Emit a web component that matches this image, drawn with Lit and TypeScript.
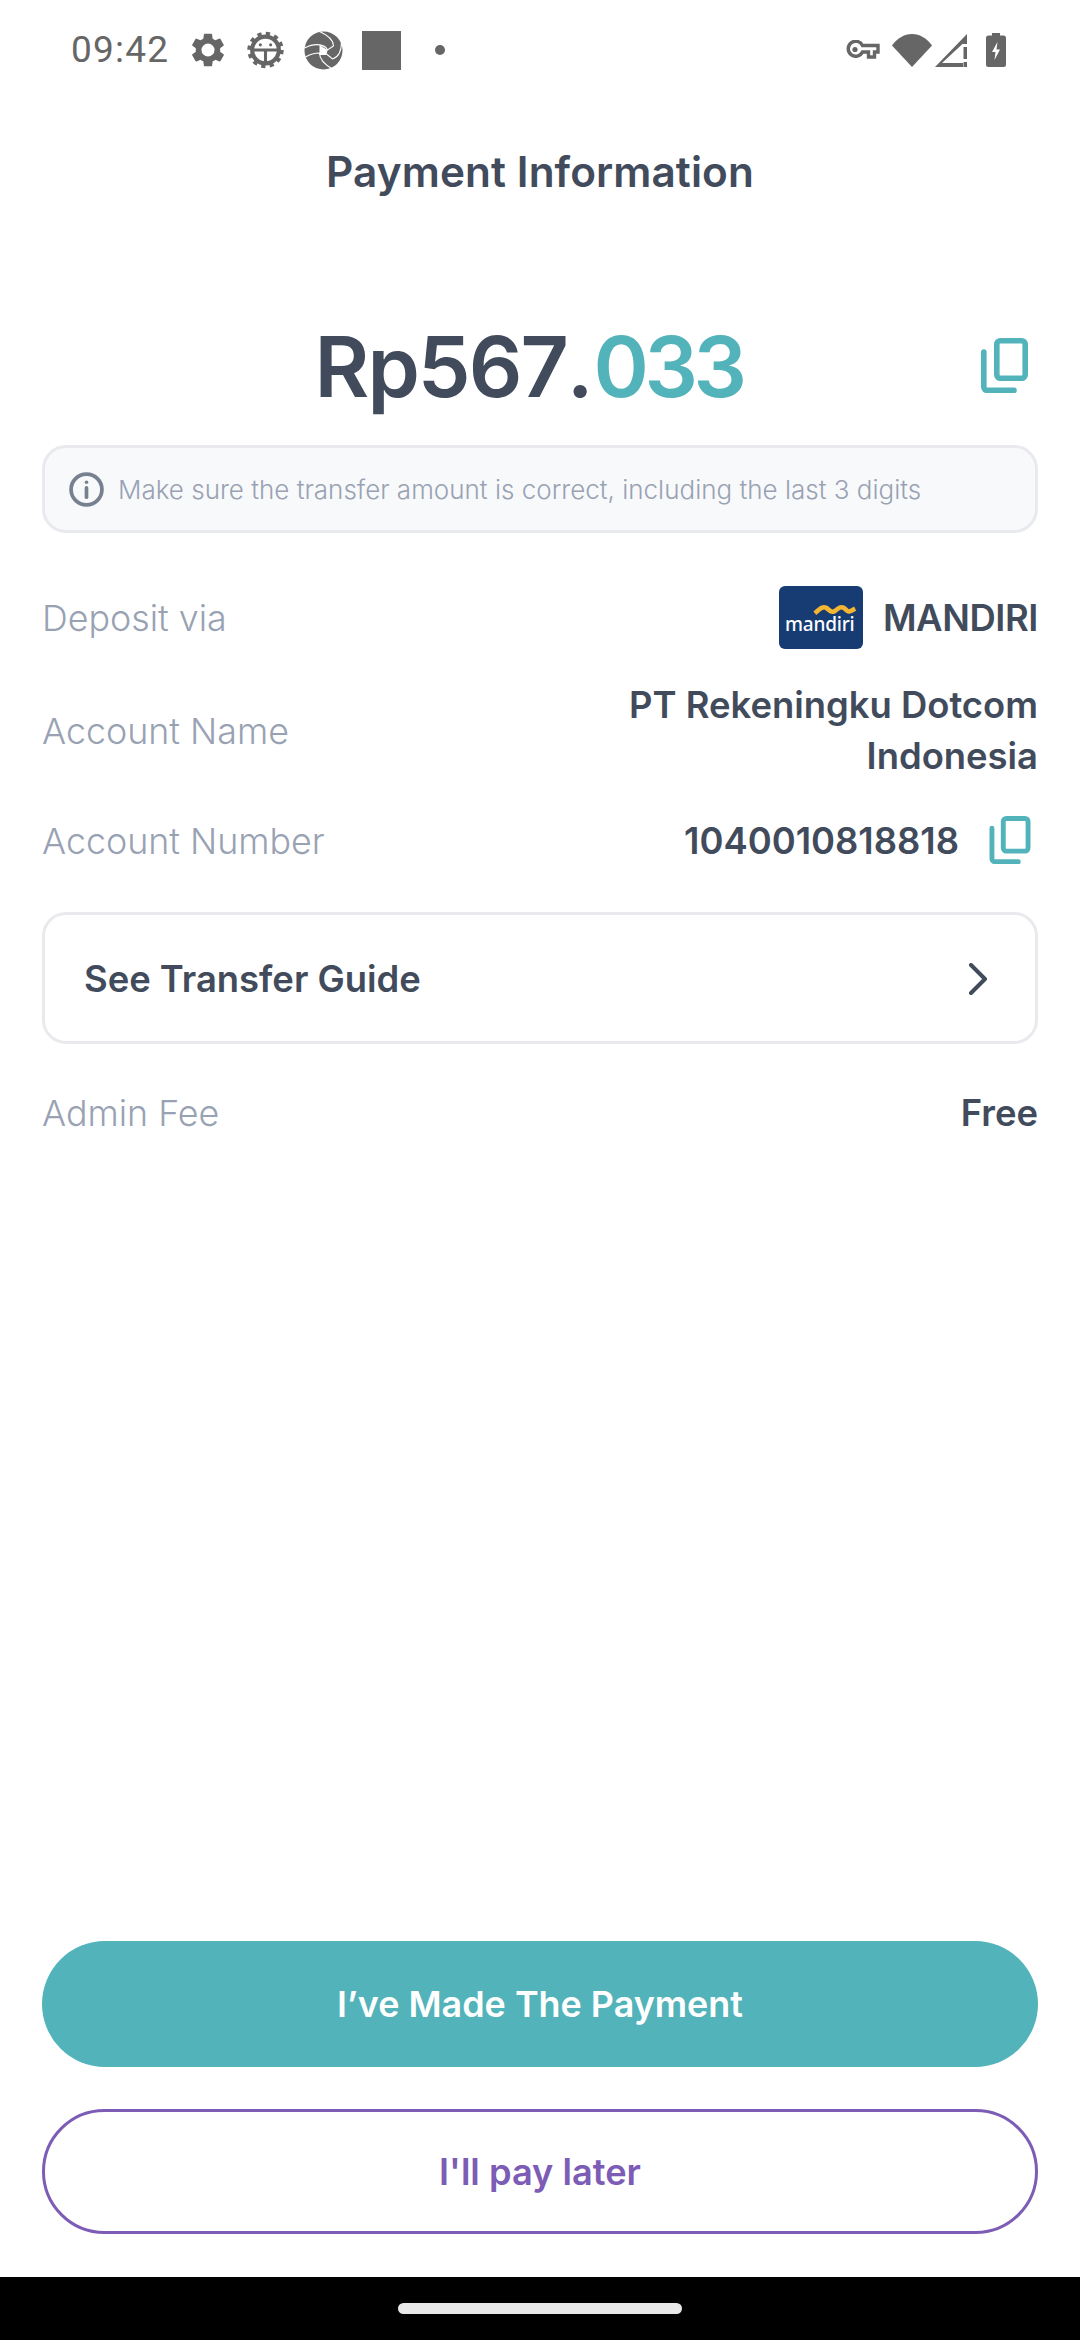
import { LitElement, html, css } from "lit";
import { customElement } from "lit/decorators.js";

const copyIcon = (cls: string) => html`<svg class=${cls} viewBox="0 0 47 55" fill="none" stroke="#52b3ba" stroke-width="5.6" stroke-linecap="round" stroke-linejoin="round"><rect x="15.8" y="2.8" width="28.4" height="37.4" rx="3.5"/><path d="M2.8 14v35a3.4 3.4 0 0 0 3.4 3.4H33"/></svg>`;

@customElement("app-root")
export class AppRoot extends LitElement {
  static styles = css`
    :host { display: block; width: 1080px; height: 2340px; background: #fff; font-family: "Inter", "Liberation Sans", sans-serif; color: #414b5c; }
    .page { height: 2340px; display: flex; flex-direction: column; }
    .status { height: 98px; flex: none; display: flex; align-items: center; color: #666; padding: 2px 0 0 71px; box-sizing: border-box; }
    .time { font: 400 37px/40px "Roboto", sans-serif; color: #666; width: 121px; letter-spacing: 1.2px; }
    .sicons { display: flex; align-items: center; }
    .gear { margin-right: 23px; }
    .droid { margin-right: 20px; }
    .shutter { margin-right: 19px; }
    .square { width: 39px; height: 39px; background: #666; margin-right: 34px; }
    .dot { width: 10px; height: 10px; border-radius: 50%; background: #666; }
    .sright { margin-left: auto; display: flex; align-items: center; margin-right: 74px; }
    .key { margin-right: 12px; }
    .wifi { margin-right: 3px; }
    .signal { margin-right: 18px; }
    svg { display: block; flex: none; }
    h1 { margin: 50px 0 0; font-size: 42.3px; line-height: 48px; font-weight: 600; text-align: center; letter-spacing: 0.1px; }
    .amount-row { margin-top: 119px; height: 100px; display: flex; align-items: center; padding: 0 53px 0 76px; }
    .amount { flex: 1; display: flex; justify-content: center; font-size: 84px; line-height: 100px; font-weight: 600; letter-spacing: -2px; padding-top: 3px; }
    .point { margin: 0 2px 0 0; }
    .cents { color: #52b3ba; letter-spacing: -4.5px; }
    .copy-lg { width: 47px; height: 55px; margin-right: -1px; }
    .copy-sm { width: 42px; height: 48px; margin-left: 30px; margin-right: 7px; }
    .info { margin: 30px 42px 0; height: 88px; box-sizing: border-box; border: 3px solid #e9eaee; border-radius: 24px; background: #f8f9fb; display: flex; align-items: center; padding-left: 24px; gap: 14px; font-size: 26px; font-weight: 300; color: #98a2b3; }
    .row { margin: 0 42px; display: flex; justify-content: space-between; align-items: center; }
    .label { font-size: 35.8px; line-height: 48px; padding-top: 1px; color: #98a2b3; font-weight: 300; }
    .val { font-size: 36.4px; line-height: 51px; padding-top: 2px; font-weight: 600; text-align: right; }
    .deposit { margin-top: 53px; height: 63px; }
    .bank { display: flex; align-items: center; gap: 20px; }
    .bank .val { letter-spacing: -0.4px; }
    .logo { width: 84px; height: 63px; border-radius: 6px; background: #173c74; position: relative; color: #fff; overflow: hidden; }
    .logo span { position: absolute; left: 6px; top: 27px; font: 500 19px/22px "Noto Sans", sans-serif; letter-spacing: -0.2px; }
    .logo svg { position: absolute; left: 34px; top: 18px; }
    .acct { margin-top: 31px; height: 100px; }
    .acct .val { width: 480px; }
    .num { margin-top: 36px; height: 48px; }
    .num .right { display: flex; align-items: center; }
    .guide { margin: 48px 42px 0; height: 132px; box-sizing: border-box; border: 3px solid #e9eaee; border-radius: 24px; display: flex; align-items: center; justify-content: space-between; padding: 2px 47px 0 39px; font-size: 36.4px; font-weight: 600; }
    .admin { margin-top: 44px; height: 48px; }
    .actions { margin-top: auto; display: flex; flex-direction: column; gap: 42px; padding: 0 42px 43px; }
    .btn { height: 126px; box-sizing: border-box; border-radius: 63px; display: flex; align-items: center; justify-content: center; font-size: 35.9px; font-weight: 600; }
    .primary { background: #52b3ba; color: #fff; }
    .secondary { border: 3px solid #7c5cb5; color: #7c5cb5; height: 125px; font-size: 36.2px; }
    .nav { height: 63px; flex: none; background: #000; display: flex; justify-content: center; padding-top: 26px; box-sizing: border-box; }
    .pill { width: 284px; height: 11px; border-radius: 6px; background: #e8e8e8; }
  `;

  render() {
    return html`<div class="page">
      <div class="status">
        <div class="time">09:42</div>
        <div class="sicons">
          <svg class="gear" width="32" height="34" viewBox="2.2 2 19.6 20" fill="#666"><path fill-rule="evenodd" d="M19.4 13c.04-.32.1-.66.1-1s-.06-.68-.1-1l2.1-1.65a.5.5 0 0 0 .12-.64l-2-3.46a.5.5 0 0 0-.61-.22l-2.49 1a7.3 7.3 0 0 0-1.69-.98L14.5 2.4a.5.5 0 0 0-.5-.4h-4a.5.5 0 0 0-.5.42L9.12 5.07c-.6.25-1.17.58-1.69.98l-2.49-1a.5.5 0 0 0-.61.22l-2 3.46a.5.5 0 0 0 .12.64L4.55 11c-.04.32-.05.66-.05 1s.01.68.05 1l-2.1 1.65a.5.5 0 0 0-.12.64l2 3.46c.12.22.39.3.61.22l2.49-1c.52.4 1.08.73 1.69.98l.38 2.65c.03.24.24.42.5.42h4c.25 0 .46-.18.5-.42l.38-2.65c.6-.25 1.17-.58 1.69-.98l2.49 1c.22.08.49 0 .61-.22l2-3.46a.5.5 0 0 0-.12-.64L19.4 13zM12 16a4 4 0 1 1 0-8 4 4 0 0 1 0 8z"/></svg>
          <svg class="droid" width="37" height="38" viewBox="0 0 36 36" fill="none" stroke="#666"><circle cx="18" cy="18" r="13" stroke-width="4"/><circle cx="18" cy="18" r="15.5" stroke-width="4.4" stroke-dasharray="4 4.1"/><path d="M5 18h26M18 18v13" stroke-width="3"/><circle cx="13" cy="13" r="1.5" fill="#666" stroke="none"/><circle cx="23" cy="13" r="1.5" fill="#666" stroke="none"/></svg>
          <svg class="shutter" width="39" height="39" viewBox="0 0 38 39"><circle cx="19" cy="19.5" r="19" fill="#666"/><path d="M15 .5C23 4 29 9 29 15l-6 4C21 14 12 11 0 17M37 11c0 8-3 15-9 17l-6-5M1 26c5-3 10-4 14-4 0 7 6 12 13 16" fill="none" stroke="#fff" stroke-width="1.1"/><path d="M15 14l8 5-1 5-7 0z" fill="#fff"/></svg>
          <div class="square"></div>
          <div class="dot"></div>
        </div>
        <div class="sright">
          <svg class="key" width="35" height="20" viewBox="0 0 35 20" fill="none"><path d="M17.5 5.5H33v6.5h-3.5v5h-6v-5h-6a7.5 7.5 0 1 1 0-6.5z" stroke="#666" stroke-width="3.4"/><circle cx="10" cy="9.5" r="2.6" fill="#666"/></svg>
          <svg class="wifi" width="40" height="33" viewBox="0 0 40 33"><path d="M0 11.5C5 4.5 12 0 20 0s15 4.5 20 11.5L20 33z" fill="#666"/></svg>
          <svg class="signal" width="33" height="33" viewBox="0 0 33 33"><path fill-rule="evenodd" d="M0 33 32 0v10h-4V9.5L7 29h21v4z" fill="#666"/><rect x="28.5" y="13" width="3.5" height="12" fill="#666"/><rect x="28.5" y="28" width="3.5" height="5" fill="#666"/></svg>
          <svg width="20" height="34" viewBox="0 0 20 34"><path d="M6 0h8v2.500h3.500A2.500 2.500 0 0 1 20 5v26.500a2.500 2.500 0 0 1-2.500 2.500h-15A2.500 2.500 0 0 1 0 31.500V5a2.500 2.500 0 0 1 2.500-2.500H6z" fill="#666"/><path d="M11.500 9 6 19h3.500l-1 8L14 16.500h-3.500z" fill="#fff"/></svg>
        </div>
      </div>

      <h1>Payment Information</h1>

      <div class="amount-row">
        <div class="amount"><span>Rp567</span><span class="point">.</span><span class="cents">033</span></div>
        ${copyIcon("copy-lg")}
      </div>

      <div class="info">
        <svg width="35" height="35" viewBox="0 0 34 34" fill="none" stroke="#76808f" stroke-width="3.6"><circle cx="17" cy="17" r="15"/><path d="M17 15.5v9" stroke-linecap="round"/><circle cx="17" cy="10" r="1.7" fill="#76808f" stroke="none"/></svg>
        <span>Make sure the transfer amount is correct, including the last 3 digits</span>
      </div>

      <div class="row deposit">
        <div class="label">Deposit via</div>
        <div class="bank">
          <div class="logo">
            <svg width="44" height="11" viewBox="0 0 46 12" fill="none" stroke="#f2b632" stroke-width="5"><path d="M1 10c5-4 8-8 12-6s5 6 9 4 6-6 10-4 4 5 7 4 4-2 6-3"/></svg>
            <span>mandiri</span>
          </div>
          <div class="val">MANDIRI</div>
        </div>
      </div>

      <div class="row acct">
        <div class="label">Account Name</div>
        <div class="val">PT Rekeningku Dotcom Indonesia</div>
      </div>

      <div class="row num">
        <div class="label">Account Number</div>
        <div class="right"><div class="val">1040010818818</div>${copyIcon("copy-sm")}</div>
      </div>

      <div class="guide">
        <span>See Transfer Guide</span>
        <svg width="20" height="32" viewBox="0 0 20 32" fill="none" stroke="#414b5c" stroke-width="4" stroke-linecap="round" stroke-linejoin="round"><path d="M3 2l14 14L3 30"/></svg>
      </div>

      <div class="row admin">
        <div class="label">Admin Fee</div>
        <div class="val">Free</div>
      </div>

      <div class="actions">
        <div class="btn primary">I’ve Made The Payment</div>
        <div class="btn secondary">I'll pay later</div>
      </div>

      <div class="nav"><div class="pill"></div></div>
    </div>`;
  }
}
